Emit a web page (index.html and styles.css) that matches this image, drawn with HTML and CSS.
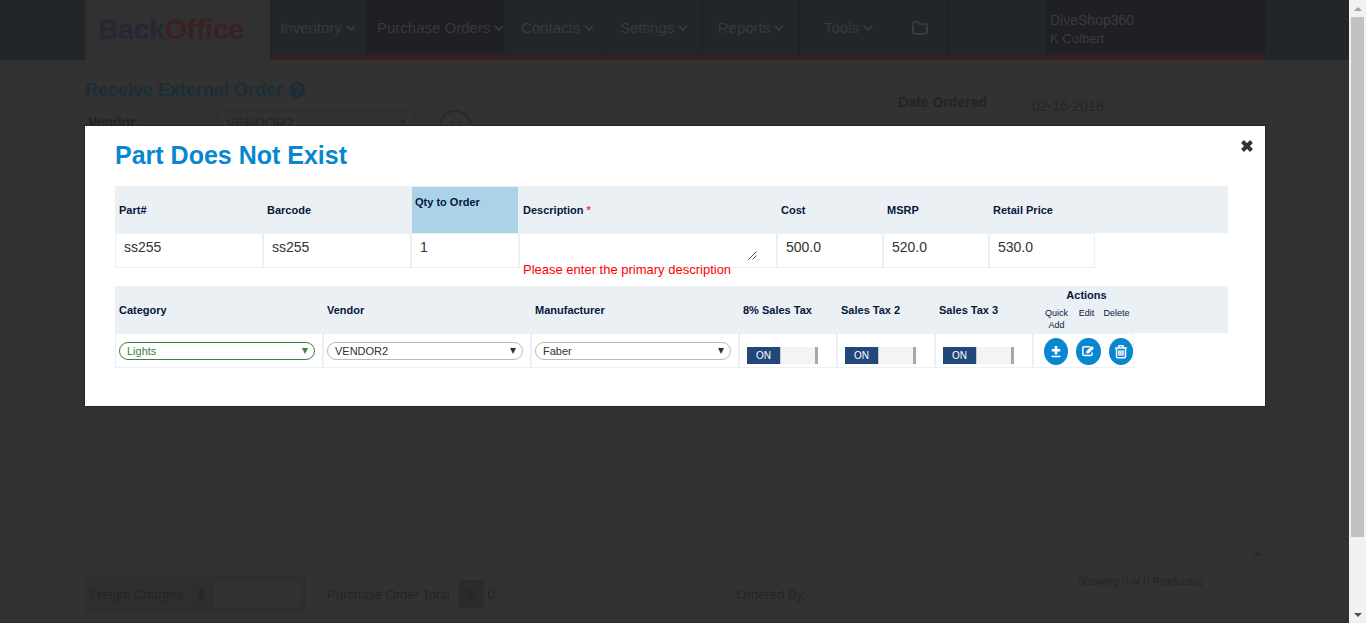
FILE: index.html
```html
<!DOCTYPE html>
<html lang="en">
<head>
<meta charset="utf-8">
<title>BackOffice - Receive External Order</title>
<link rel="stylesheet" href="styles.css">
</head>
<body>
<div class="window">
  <div class="page">
    <header class="topbar">
      <div class="topbar-inner">
        <div class="logo"><span class="logo-back">Back</span><span class="logo-office">Office</span></div>
        <nav class="nav">
          <a class="nav-item" href="#">Inventory <svg class="chev" viewBox="0 0 10 6"><path d="M1 1l4 4 4-4"/></svg></a>
          <a class="nav-item nav-active" href="#">Purchase Orders <svg class="chev" viewBox="0 0 10 6"><path d="M1 1l4 4 4-4"/></svg></a>
          <a class="nav-item" href="#">Contacts <svg class="chev" viewBox="0 0 10 6"><path d="M1 1l4 4 4-4"/></svg></a>
          <a class="nav-item" href="#">Settings <svg class="chev" viewBox="0 0 10 6"><path d="M1 1l4 4 4-4"/></svg></a>
          <a class="nav-item" href="#">Reports <svg class="chev" viewBox="0 0 10 6"><path d="M1 1l4 4 4-4"/></svg></a>
          <a class="nav-item nav-tools" href="#">Tools <svg class="chev" viewBox="0 0 10 6"><path d="M1 1l4 4 4-4"/></svg></a>
          <a class="nav-item nav-folder" href="#" aria-label="Files"><svg class="folder" viewBox="0 0 16 14"><path d="M1 3q0-2 2-2h2.500q1.500 0 1.500 2h6q2 0 2 2v6q0 2-2 2H3q-2 0-2-2z"/></svg></a>
          <div class="user"><div class="shop">DiveShop360</div><div class="person">K Colbert</div></div>
        </nav>
      </div>
    </header>
    <main class="content">
      <div class="top-row">
        <div class="order">
          <h1 class="heading">Receive External Order <svg class="help" viewBox="0 0 16 16"><circle cx="8" cy="8" r="8"/><path d="M5.500 6q0-2.500 2.600-2.500T10.700 6Q10.700 7.200 9 8 8 8.500 8 9.500"/><path d="M8 11v2"/></svg></h1>
          <div class="vendor-row">
            <label class="bold-label vendor-label" for="order-vendor">Vendor:</label>
            <div class="picker dim-picker"><select id="order-vendor" class="dim-select"><option>VENDOR2</option></select></div>
            <button class="round" type="button" aria-label="Clear vendor"><svg class="round-icon" viewBox="0 0 14 14"><path d="M1 1l12 12M13 1L1 13"/></svg></button>
          </div>
        </div>
        <div class="date-row">
          <label class="bold-label" for="date">Date Ordered</label>
          <input id="date" class="dim-input date-input" value="02-16-2018">
        </div>
      </div>
      <div class="list"><div class="list-bar"><span class="arrow-down"></span></div></div>
      <div class="totals">
        <div class="freight">
          <label for="freight">Freight Charges</label><span class="dollar">$</span><input id="freight" class="dim-input freight-input">
        </div>
        <div class="field total">
          <label for="total">Purchase Order Total</label><span class="dollar dollar-total">$</span><input id="total" class="dim-input" value="0">
        </div>
        <div class="field ordered">
          <label for="by">Ordered By:</label><input id="by" class="dim-input">
        </div>
        <div class="showing">Showing 0 of 0 Product(s)</div>
      </div>
    </main>

    <section class="modal" role="dialog" aria-labelledby="modal-title">
      <h2 class="modal-title" id="modal-title">Part Does Not Exist</h2>
      <button class="close" type="button" aria-label="Close"><svg class="close-icon" viewBox="0 0 14 14"><path d="M2.500 2.500l9 9M11.500 2.500l-9 9"/></svg></button>
      <table class="grid">
        <colgroup><col class="w148"><col class="w148"><col class="w108"><col class="w258"><col class="w106"><col class="w106"><col class="w106"><col></colgroup>
        <thead><tr><th>Part#</th><th>Barcode</th><th class="qty">Qty to Order</th><th>Description <span class="star">*</span></th><th>Cost</th><th>MSRP</th><th>Retail Price</th><td class="blank"></td></tr></thead>
        <tbody><tr>
          <td><input class="cell-input" aria-label="Part#" value="ss255"></td>
          <td><input class="cell-input" aria-label="Barcode" value="ss255"></td>
          <td><input class="cell-input" aria-label="Qty to Order" value="1"></td>
          <td class="desc"><textarea class="cell-area" aria-label="Description"></textarea><svg class="grip" viewBox="0 0 9 9"><path d="M0.500 8.500l8-8M4.500 8.500l4-4"/></svg><div class="error">Please enter the primary description</div></td>
          <td><input class="cell-input" aria-label="Cost" value="500.0"></td>
          <td><input class="cell-input" aria-label="MSRP" value="520.0"></td>
          <td><input class="cell-input" aria-label="Retail Price" value="530.0"></td>
          <td class="blank"></td>
        </tr></tbody>
      </table>
      <table class="grid">
        <colgroup><col class="w208"><col class="w208"><col class="w208"><col class="w98"><col class="w98"><col class="w98"><col class="w101"><col></colgroup>
        <thead><tr><th>Category</th><th>Vendor</th><th>Manufacturer</th><th>8% Sales Tax</th><th>Sales Tax 2</th><th>Sales Tax 3</th>
          <th class="actions-head">Actions<div class="action-names"><span>Quick Add</span><span>Edit</span><span>Delete</span></div></th><td class="blank"></td></tr></thead>
        <tbody><tr>
          <td><div class="picker picked"><select class="pill" aria-label="Category"><option>Lights</option></select></div></td>
          <td><div class="picker"><select class="pill" aria-label="Vendor"><option>VENDOR2</option></select></div></td>
          <td><div class="picker"><select class="pill" aria-label="Manufacturer"><option>Faber</option></select></div></td>
          <td><label class="switch"><input class="switch-box" type="checkbox" checked aria-label="8% Sales Tax"><span class="switch-on">ON</span></label></td>
          <td><label class="switch"><input class="switch-box" type="checkbox" checked aria-label="Sales Tax 2"><span class="switch-on">ON</span></label></td>
          <td><label class="switch"><input class="switch-box" type="checkbox" checked aria-label="Sales Tax 3"><span class="switch-on">ON</span></label></td>
          <td class="actions"><div class="action-row">
            <button class="act" type="button" aria-label="Quick Add"><svg class="act-icon" viewBox="0 0 14 14"><path class="fill" d="M5.700 1h2.600v3h3v2.500h-3v3H5.700v-3h-3V4h3z"/><path d="M2.500 11.500h9"/></svg></button>
            <button class="act" type="button" aria-label="Edit"><svg class="act-icon" viewBox="0 0 14 14"><path d="M9 1.800H3.200q-1.400 0-1.400 1.400v6q0 1.400 1.400 1.400h6.500q1.400 0 1.400-1.400V7.500"/><path class="fill" d="M5.300 6.300l5.400-5.400 2.300 2.300-5.400 5.400H5.300z"/></svg></button>
            <button class="act" type="button" aria-label="Delete"><svg class="act-icon" viewBox="0 0 14 14"><path d="M1 3h12M4.700 3V1.300q0-.6.6-.6h3.400q.6 0 .6.600V3M2.500 3v8.500q0 1.300 1.300 1.300h6.400q1.300 0 1.300-1.300V3M5 5.200v5.500M7 5.200v5.500M9 5.200v5.500"/></svg></button>
          </div></td>
          <td class="blank"></td>
        </tr></tbody>
      </table>
    </section>
  </div>
  <div class="scrollbar" aria-hidden="true">
    <span class="arrow-up"></span><span class="thumb"></span><span class="track"></span><span class="arrow-down"></span>
  </div>
</div>
</body>
</html>
```

FILE: styles.css
```css
* { box-sizing: border-box; }
body { margin: 0; font-family: "Liberation Sans", Arial, sans-serif; font-size: 13px; color: #242424; background: #323232; }
button, input, select, textarea { font-family: inherit; margin: 0; border-radius: 0; outline: none; }
svg { fill: none; stroke: currentColor; }

.window { display: flex; height: 100vh; min-height: 600px; }
.page { position: relative; flex: 1; min-width: 0; display: flex; flex-direction: column; border-bottom: 1px solid #2c2729; }

/* Top bar */
.topbar { background: #22262b; height: 60px; }
.topbar-inner { display: flex; align-items: flex-start; margin: 0 84px 0 85px; }
.logo { width: 185px; height: 66px; padding: 14px 13px; background: #313131; font-size: 28px; line-height: 32px; font-weight: bold; }
.logo-back { color: #272632; }
.logo-office { color: #3b2022; }
.nav { flex: 1; display: flex; height: 60px; border-bottom: 5px solid #391e1f; }
.nav-item { width: 97px; display: flex; align-items: center; justify-content: center; gap: 4px; border-right: 1px solid #1d2126; color: #38393b; font-size: 15px; text-decoration: none; white-space: nowrap; }
.nav-active { width: 137px; margin-right: 5px; padding-left: 10px; justify-content: flex-start; background: #1f2023; border-right: 0; }
.nav-active + .nav-item { border-left: 1px solid #1d2126; }
.nav-tools { border-right: 0; }
.nav-folder { width: 52px; justify-content: flex-start; padding-left: 15px; }
.chev { width: 10px; height: 6px; stroke-width: 2; }
.folder { width: 16px; height: 14px; stroke-width: 2; }
.user { width: 220px; margin-left: auto; padding: 11px 5px; background: #1f2023; color: #3b3c3d; font-size: 14px; line-height: 18px; }
.person { font-size: 13px; line-height: 20px; }

/* Order page under the dialog */
.content { flex: 1; display: flex; flex-direction: column; margin: 0 84px 0 85px; padding-bottom: 9px; }
.top-row { display: flex; justify-content: space-between; padding-top: 19px; }
.heading { margin: 0; display: flex; align-items: center; gap: 6px; font-size: 18px; line-height: 22px; color: #1b2d36; }
.help { width: 16px; height: 16px; fill: #1b2d36; stroke: none; }
.help path { fill: none; stroke: #323232; stroke-width: 2; }
.vendor-row { display: flex; align-items: flex-start; padding: 9px 3px; }
.bold-label { font-size: 14px; font-weight: bold; line-height: 24px; }
.vendor-label { width: 129px; }
.dim-select { width: 100%; height: 26px; padding: 0 8px; appearance: none; border: 1px solid #2b2b2b; border-radius: 5px; background: none; color: #242424; font-size: 14px; }
.round { width: 33px; height: 33px; margin-left: 24px; padding: 8px; border: 2px solid #1b2d36; border-radius: 50%; background: none; color: #1b2d36; display: flex; align-items: center; justify-content: center; }
.round-icon { width: 14px; height: 14px; flex: none; stroke-width: 1.5; }
.date-row { display: flex; align-items: flex-start; gap: 40px; padding: 11px 20px 0 0; }
.dim-input { height: 28px; padding: 0 4px; border: 1px solid #2e2e2e; background: none; color: #242424; font-size: 14px; min-width: 0; }
.date-input { width: 218px; height: 28px; margin-top: 2px; }
.list { flex: 1; display: flex; justify-content: flex-end; }
.list-bar { width: 17px; background: #313131; display: flex; align-items: flex-end; justify-content: center; padding-bottom: 7px; }
.list-bar .arrow-down { border-top-color: #282828; }
.totals { display: flex; align-items: center; margin-top: 11px; }
.freight { display: flex; align-items: center; width: 221px; height: 37px; padding: 0 5px; background: #2f2f2f; }
.freight label { flex: 1; }
.dollar { width: 24px; height: 28px; line-height: 30px; text-align: center; font-size: 14px; background: #2e2e2e; }
.dollar-total { margin-left: 9px; background: #2b2b2b; }
.freight-input { width: 88px; background: #323232; }
.field { display: flex; align-items: center; }
.field .dim-input { width: 217px; }
.total { margin-left: 21px; }
.ordered { margin-left: 37px; gap: 15px; }
.showing { margin-left: 38px; font-size: 11px; line-height: 12px; padding-bottom: 26px; height: 38px; }

/* Dialog */
.modal { position: absolute; top: 125px; left: 84px; right: 83px; padding: 15px 37px 38px 30px; background: #fff; border: 1px solid #262626; color: #333; }
.modal-title { margin: 0 0 17px; font-size: 25px; line-height: 28px; color: #0887cf; }
.close { position: absolute; top: 13px; right: 11px; width: 14px; height: 14px; padding: 0; border: 0; background: none; color: #333; }
.close-icon { display: block; width: 14px; height: 14px; stroke-width: 4; }
.grid { width: 100%; table-layout: fixed; border-collapse: separate; border-spacing: 0; margin-bottom: 18px; }
.grid:last-child { margin-bottom: 0; }
.w98 { width: 98px; } .w101 { width: 101px; } .w106 { width: 106px; } .w108 { width: 108px; }
.w148 { width: 148px; } .w208 { width: 208px; } .w258 { width: 258px; }
.grid thead { background: #ebf0f4; }
.grid th { height: 47px; padding: 0 4px; text-align: left; vertical-align: middle; font-size: 11px; line-height: 12px; color: #07173c; }
.grid .qty { padding-bottom: 16px; background: #aad3e8; border: 1px solid #ebf0f4; border-bottom: 0; padding-left: 3px; }
.star { color: #ef3e4a; }
.grid tbody td { height: 35px; padding: 0 3px; border: 1px solid #ebf0f4; vertical-align: middle; }
.grid tbody .blank { border: 0; }
.cell-input { display: block; width: 100%; height: 31px; padding: 0 5px 8px; border: 0; background: none; color: #333; font-size: 14px; }
.grid .desc { position: relative; }
.cell-area { display: block; width: 100%; height: 31px; padding: 4px 5px; border: 0; background: none; resize: none; font-size: 14px; overflow: hidden; }
.grip { position: absolute; right: 19px; bottom: 7px; width: 9px; height: 9px; stroke: #555; stroke-width: 1; }
.error { position: absolute; left: 3px; top: 28px; font-size: 13px; line-height: 15px; color: #f00; white-space: nowrap; }

.picker { position: relative; width: 196px; color: #333; }
.picker::after { content: ""; position: absolute; right: 7px; top: 6px; border: 3px solid transparent; border-top: 6px solid currentColor; border-bottom: 0; pointer-events: none; }
.dim-picker { width: 198px; color: #282828; }
.dim-picker::after { top: 10px; right: 9px; }
.pill { display: block; width: 100%; height: 18px; padding: 0 7px; appearance: none; border: 1px solid #bbb; border-radius: 9px; background: #fff; color: inherit; font-size: 11px; }
.picked { color: #3c8140; }
.picked .pill { border-color: #3c8140; }
.switch { display: flex; position: relative; width: 71px; height: 17px; margin: 10px 4px 0; background: #f4f4f4; border-right: 3px solid #a8a8a8; }
.switch-box { position: absolute; inset: 0; margin: 0; width: 100%; height: 100%; opacity: 0; }
.switch-on { width: 34px; border-right: 1px solid #ccc; background: #22477a; color: #fff; font-size: 10px; line-height: 17px; text-align: center; }
.grid .actions-head { padding: 3px 0 0 6px; text-align: center; vertical-align: top; }
.action-names { display: grid; grid-template-columns: 30px 30px 30px; justify-content: center; margin-top: 6px; font-size: 9px; font-weight: normal; }
.grid tbody .actions { padding: 2px 0 0 10px; }
.action-row { display: flex; gap: 8px; }
.act { width: 25px; height: 27px; padding: 0; border: 0; border-radius: 50%; background: #0887cf; color: #fff; display: flex; align-items: center; justify-content: center; }
.act-icon { width: 14px; height: 14px; stroke-width: 1.5; }
.act-icon .fill { fill: currentColor; stroke: none; }

/* Window scroll bar */
.scrollbar { width: 17px; display: flex; flex-direction: column; align-items: center; background: #f1f1f1; padding: 7px 0 6px; }
.arrow-up { border: 4px solid transparent; border-top: 0; border-bottom: 4px solid #a3a3a3; }
.arrow-down { border: 4px solid transparent; border-bottom: 0; border-top: 4px solid #505050; }
.thumb { flex: 520; width: 13px; margin-top: 6px; background: #c1c1c1; }
.track { flex: 76; }
```
